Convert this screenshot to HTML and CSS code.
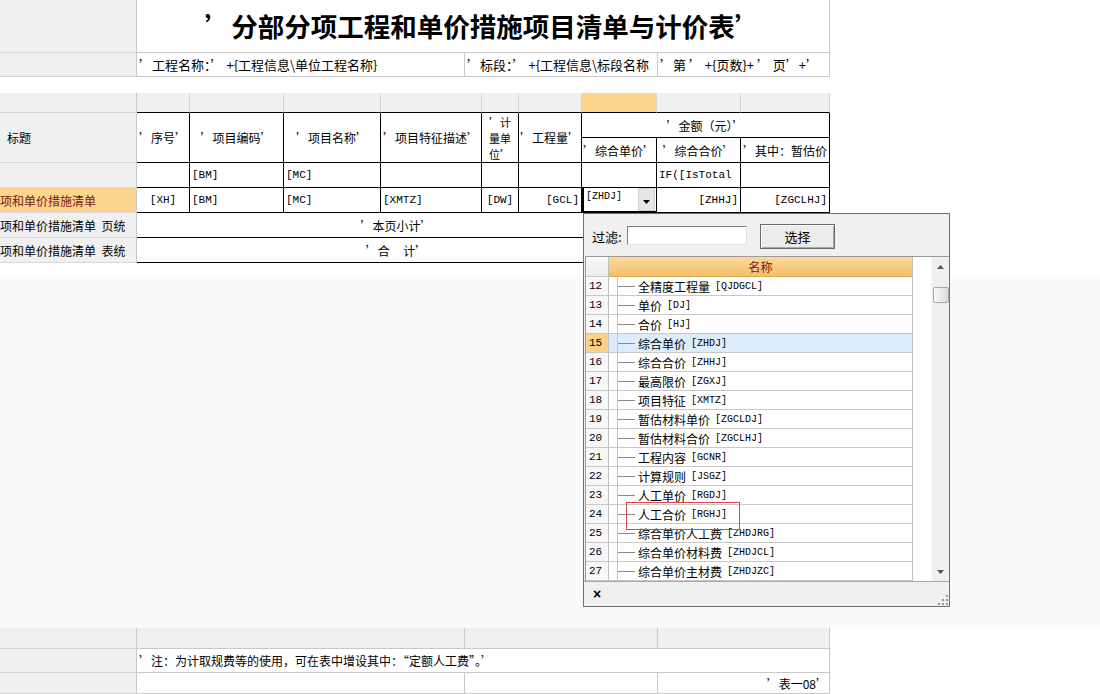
FILE: index.html
```html
<!DOCTYPE html>
<html lang="zh">
<head>
<meta charset="utf-8">
<title>分部分项工程和单价措施项目清单与计价表</title>
<link rel="stylesheet" href="styles.css">
</head>
<body>
<div class="page">
  <div class="sheet top">
    <div class="lbl"></div>
    <div class="title">’分部分项工程和单价措施项目清单与计价表’</div>
    <div class="lbl"></div>
    <div class="cell big">’工程名称：’ +{工程信息\单位工程名称}</div>
    <div class="cell big">’标段：’ +{工程信息\标段名称</div>
    <div class="cell big">’第 ’ +{页数}+ ’ 页’+’</div>
  </div>

  <div class="main">
    <div class="gh first"></div>
    <div class="gh"></div>
    <div class="gh"></div>
    <div class="gh"></div>
    <div class="gh"></div>
    <div class="gh"></div>
    <div class="gh"></div>
    <div class="gh on"></div>
    <div class="gh"></div>
    <div class="gh"></div>

    <div class="side rs2 pad">标题</div>
    <div class="c hd rs2">’序号’</div>
    <div class="c hd rs2">’项目编码’</div>
    <div class="c hd rs2">’项目名称’</div>
    <div class="c hd rs2">’项目特征描述’</div>
    <div class="c hd rs2 unit">’计<br>量单<br>位’</div>
    <div class="c hd rs2">’工程量’</div>
    <div class="c hd cs3">’金额（元）’</div>
    <div class="c hd">’综合单价’</div>
    <div class="c hd">’综合合价’</div>
    <div class="c left">’其中：暂估价</div>

    <div class="side"></div>
    <div class="c"></div>
    <div class="c code">[BM]</div>
    <div class="c code">[MC]</div>
    <div class="c"></div>
    <div class="c"></div>
    <div class="c"></div>
    <div class="c"></div>
    <div class="c code">IF([IsTotal</div>
    <div class="c"></div>

    <div class="side hl">项和单价措施清单</div>
    <div class="c code ctr">[XH]</div>
    <div class="c code">[BM]</div>
    <div class="c code">[MC]</div>
    <div class="c code">[XMTZ]</div>
    <div class="c code ctr">[DW]</div>
    <div class="c code rt">[GCL]</div>
    <div class="c combo"><span class="code sm">[ZHDJ]</span><span class="ddbtn"><svg width="7" height="4" viewBox="0 0 7 4"><path d="M0 0H7L3.5 4Z" fill="#000"/></svg></span></div>
    <div class="c code rt">[ZHHJ]</div>
    <div class="c code rt">[ZGCLHJ]</div>

    <div class="side">项和单价措施清单&nbsp;&nbsp;页统</div>
    <div class="c cs7 ctr">’本页小计’</div>
    <div class="c"></div>
    <div class="c"></div>

    <div class="side">项和单价措施清单&nbsp;&nbsp;表统</div>
    <div class="c cs7 ctr">’合&nbsp;&nbsp;&nbsp;&nbsp;&nbsp;计’</div>
    <div class="c"></div>
    <div class="c"></div>
  </div>

  <div class="band"></div>

  <div class="sheet bottom">
    <div class="lbl"></div>
    <div class="gcell"></div>
    <div class="gcell"></div>
    <div class="gcell"></div>
    <div class="lbl"></div>
    <div class="cell note">’注：为计取规费等的使用，可在表中增设其中：“定额人工费”。’</div>
    <div class="lbl"></div>
    <div class="cell"></div>
    <div class="cell"></div>
    <div class="cell rt">’表一08’</div>
  </div>

  <div class="popup">
    <div class="filter">
      <span class="flabel">过滤:</span>
      <div class="finput"></div>
      <div class="fbtn">选择</div>
    </div>
    <div class="list">
      <div class="rows">
        <div class="lrow head"><div class="num"></div><div class="name">名称</div><div class="pad"></div></div>
        <div class="lrow"><div class="num">12</div><div class="name"><span class="tree"></span>全精度工程量 <span class="lc">[QJDGCL]</span></div><div class="pad"></div></div>
        <div class="lrow"><div class="num">13</div><div class="name"><span class="tree"></span>单价 <span class="lc">[DJ]</span></div><div class="pad"></div></div>
        <div class="lrow"><div class="num">14</div><div class="name"><span class="tree"></span>合价 <span class="lc">[HJ]</span></div><div class="pad"></div></div>
        <div class="lrow cur"><div class="num">15</div><div class="name"><span class="tree"></span>综合单价 <span class="lc">[ZHDJ]</span></div><div class="pad"></div></div>
        <div class="lrow"><div class="num">16</div><div class="name"><span class="tree"></span>综合合价 <span class="lc">[ZHHJ]</span></div><div class="pad"></div></div>
        <div class="lrow"><div class="num">17</div><div class="name"><span class="tree"></span>最高限价 <span class="lc">[ZGXJ]</span></div><div class="pad"></div></div>
        <div class="lrow"><div class="num">18</div><div class="name"><span class="tree"></span>项目特征 <span class="lc">[XMTZ]</span></div><div class="pad"></div></div>
        <div class="lrow"><div class="num">19</div><div class="name"><span class="tree"></span>暂估材料单价 <span class="lc">[ZGCLDJ]</span></div><div class="pad"></div></div>
        <div class="lrow"><div class="num">20</div><div class="name"><span class="tree"></span>暂估材料合价 <span class="lc">[ZGCLHJ]</span></div><div class="pad"></div></div>
        <div class="lrow"><div class="num">21</div><div class="name"><span class="tree"></span>工程内容 <span class="lc">[GCNR]</span></div><div class="pad"></div></div>
        <div class="lrow"><div class="num">22</div><div class="name"><span class="tree"></span>计算规则 <span class="lc">[JSGZ]</span></div><div class="pad"></div></div>
        <div class="lrow"><div class="num">23</div><div class="name"><span class="tree"></span>人工单价 <span class="lc">[RGDJ]</span></div><div class="pad"></div></div>
        <div class="lrow"><div class="num">24</div><div class="name"><span class="tree"></span>人工合价 <span class="lc">[RGHJ]</span></div><div class="pad"></div></div>
        <div class="lrow"><div class="num">25</div><div class="name"><span class="tree"></span>综合单价人工费 <span class="lc">[ZHDJRG]</span></div><div class="pad"></div></div>
        <div class="lrow"><div class="num">26</div><div class="name"><span class="tree"></span>综合单价材料费 <span class="lc">[ZHDJCL]</span></div><div class="pad"></div></div>
        <div class="lrow"><div class="num">27</div><div class="name"><span class="tree"></span>综合单价主材费 <span class="lc">[ZHDJZC]</span></div><div class="pad"></div></div>
      </div>
      <div class="vscroll">
        <svg class="arr" width="7" height="4" viewBox="0 0 7 4"><path d="M3.5 0L7 4H0Z" fill="#555"/></svg>
        <div class="thumb"></div>
        <svg class="arr down" width="7" height="4" viewBox="0 0 7 4"><path d="M0 0H7L3.5 4Z" fill="#555"/></svg>
      </div>
    </div>
    <div class="pbar">
      <span class="close">×</span>
      <svg class="grip" width="10" height="10" viewBox="0 0 10 10"><g fill="#9a9a9a"><rect x="8" y="0" width="2" height="2"/><rect x="4" y="4" width="2" height="2"/><rect x="8" y="4" width="2" height="2"/><rect x="0" y="8" width="2" height="2"/><rect x="4" y="8" width="2" height="2"/><rect x="8" y="8" width="2" height="2"/></g></svg>
    </div>
    <div class="redbox"></div>
  </div>
</div>
</body>
</html>
```

FILE: styles.css
```css
* { box-sizing: border-box; margin: 0; padding: 0; }
html, body { width: 1100px; height: 694px; overflow: hidden; background: #fff; }
body {
  font-family: "Noto Sans CJK SC", "Liberation Sans", sans-serif;
  font-size: 12px;
  color: #000;
}
.page { position: relative; width: 1100px; height: 694px; }

.sheet {
  display: grid;
  grid-template-columns: 137px 328px 193px 172px;
  width: 830px;
}
.top { grid-template-rows: 53px 24px; }
.bottom { grid-template-rows: 21px 24px 21px; }

.lbl {
  background: #f0f0f0;
  border-right: 1px solid #c8c8c8;
  border-bottom: 1px solid #d4d4d4;
}
.title {
  grid-column: 2 / 5;
  border-right: 1px solid #c8c8c8;
  border-bottom: 1px solid #c8c8c8;
  display: flex;
  align-items: center;
  justify-content: center;
  font-family: "Noto Sans CJK SC", serif;
  font-weight: 700;
  font-size: 26.5px;
  padding-bottom: 2px;
}
.cell {
  border-right: 1px solid #c8c8c8;
  border-bottom: 1px solid #c8c8c8;
  padding: 0 2px;
  display: flex;
  align-items: center;
  white-space: nowrap;
  overflow: hidden;
}
.cell.big { font-size: 13px; }
.cell.note { grid-column: span 3; }
.cell.rt { justify-content: flex-end; padding-right: 1px; }
.gcell {
  background: #f0f0f0;
  border-right: 1px solid #c8c8c8;
  border-bottom: 1px solid #c8c8c8;
}

.main {
  margin-top: 16px;
  display: grid;
  width: 830px;
  grid-template-columns: 137px 53px 94px 97px 101px 37px 63px 75px 84px 89px;
  grid-template-rows: 20px repeat(6, 25px);
}
.gh {
  background: #f0f0f0;
  border-right: 1px solid #d4d4d4;
  border-bottom: 1px solid #000;
}
.gh.first { border-bottom-color: #d4d4d4; border-right-color: #c8c8c8; }
.gh.on { background: #fdd48e; }
.side {
  background: #f0f0f0;
  border-right: 1px solid #c8c8c8;
  border-bottom: 1px solid #d8d8d8;
  display: flex;
  align-items: center;
  white-space: nowrap;
  overflow: hidden;
}
.side.pad { padding-left: 7px; }
.side.hl { background: #fdd48e; color: #7a1414; }
.c {
  border-right: 1px solid #000;
  border-bottom: 1px solid #000;
  display: flex;
  align-items: center;
  white-space: nowrap;
  overflow: hidden;
  padding: 0 2px;
}
.hd { justify-content: center; }
.c.left { padding-left: 2px; }
.rs2 { grid-row: span 2; }
.cs3 { grid-column: span 3; }
.cs7 { grid-column: span 7; }
.unit {
  white-space: normal;
  text-align: center;
  font-size: 11px;
  line-height: 16px;
  padding: 0;
}
.code { font-family: "Liberation Mono", monospace; font-size: 11px; }
.ctr { justify-content: center; }
.rt { justify-content: flex-end; }
.combo {
  border-left: 2px solid #000;
  border-bottom: 2px solid #000;
  align-items: flex-start;
  padding: 0 1px 0 2px;
}
.combo .sm { font-size: 10px; margin-top: 3px; }
.ddbtn {
  margin-left: auto;
  width: 17px;
  height: 23px;
  background: #e6e6e6;
  border: 1px solid #cfcfcf;
  display: flex;
  align-items: center;
  justify-content: center;
  padding-top: 4px;
}

.band { margin-top: 14px; height: 351px; background: #fafafa; }

/* popup */
.popup {
  position: absolute;
  left: 583px;
  top: 213px;
  width: 367px;
  height: 394px;
  background: #f0f0f0;
  border: 1px solid #707070;
  display: flex;
  flex-direction: column;
}
.filter {
  height: 42px;
  display: flex;
  align-items: center;
  padding-left: 8px;
  font-size: 13px;
}
.flabel { width: 35px; padding-top: 2px; }
.finput {
  width: 120px;
  height: 19px;
  background: #fff;
  border: 1px solid;
  border-color: #808080 #e0e0e0 #e0e0e0 #808080;
}
.fbtn {
  margin-left: 13px;
  margin-top: 3px;
  width: 75px;
  height: 25px;
  background: #ececec;
  border: 1px solid #6a6a6a;
  box-shadow: inset 1px 1px #fff, inset -1px -1px #a8a8a8;
  display: flex;
  align-items: center;
  justify-content: center;
  font-size: 13px;
}
.list {
  height: 325px;
  margin-left: 1px;
  border-top: 1px solid #9a9a9a;
  border-left: 1px solid #9a9a9a;
  display: flex;
  background: #fff;
}
.rows { width: 345px; display: flex; flex-direction: column; }
.lrow { display: flex; height: 19px; flex: none; }
.lrow .num {
  width: 23px;
  background: #f7f7f7;
  border-right: 1px solid #c0c0c0;
  border-bottom: 1px solid #c8c8c8;
  font-family: "Liberation Mono", monospace;
  font-size: 11px;
  padding-left: 3px;
  display: flex;
  align-items: center;
}
.lrow .name {
  width: 304px;
  border-right: 1px solid #c0c0c0;
  border-bottom: 1px solid #c8c8c8;
  display: flex;
  align-items: center;
  white-space: nowrap;
  overflow: hidden;
}
.lrow .pad { width: 18px; }
.lc { font-family: "Liberation Mono", monospace; font-size: 10px; margin-left: 5px; }
.tree {
  width: 26px;
  height: 100%;
  margin-right: 3px;
  flex: none;
  background:
    linear-gradient(#c4c4c4, #c4c4c4) 8px 0 / 1px 100% no-repeat,
    linear-gradient(#8a8a8a, #8a8a8a) 9px 9px / 17px 1px no-repeat;
}
.lrow.head { height: 20px; }
.lrow.head .num { background: linear-gradient(#f8f8f8, #ececec); border-bottom-color: #c8c8c8; }
.lrow.head .name {
  justify-content: center;
  background: linear-gradient(#fdd99a, #f3c06a);
  border-bottom: 1px solid #e0aa58;
  color: #7a1414;
}
.lrow.cur .num { background: #fbd08a; }
.lrow.cur .name { background: #ddecfb; }

.vscroll {
  width: 18px;
  background: #efefef;
  border-left: 1px solid #f8f8f8;
  display: flex;
  flex-direction: column;
  align-items: center;
  padding-top: 8px;
}
.thumb {
  margin-top: 18px;
  width: 16px;
  height: 16px;
  border: 1px solid #a8a8a8;
  border-radius: 2px;
  background: linear-gradient(90deg, #fafafa, #dcdcdc);
}
.arr.down { margin-top: auto; margin-bottom: 7px; }
.pbar {
  height: 25px;
  border-top: 1px solid #a8a8a8;
  display: flex;
  align-items: center;
  padding-left: 9px;
  padding-right: 1px;
  position: relative;
}
.close { font-family: "Liberation Sans", sans-serif; font-size: 14px; font-weight: 700; }
.grip { margin-left: auto; margin-top: 12px; }
.redbox {
  position: absolute;
  left: 42px;
  top: 288px;
  width: 114px;
  height: 28px;
  border: 1px solid #d44a4a;
}
```
